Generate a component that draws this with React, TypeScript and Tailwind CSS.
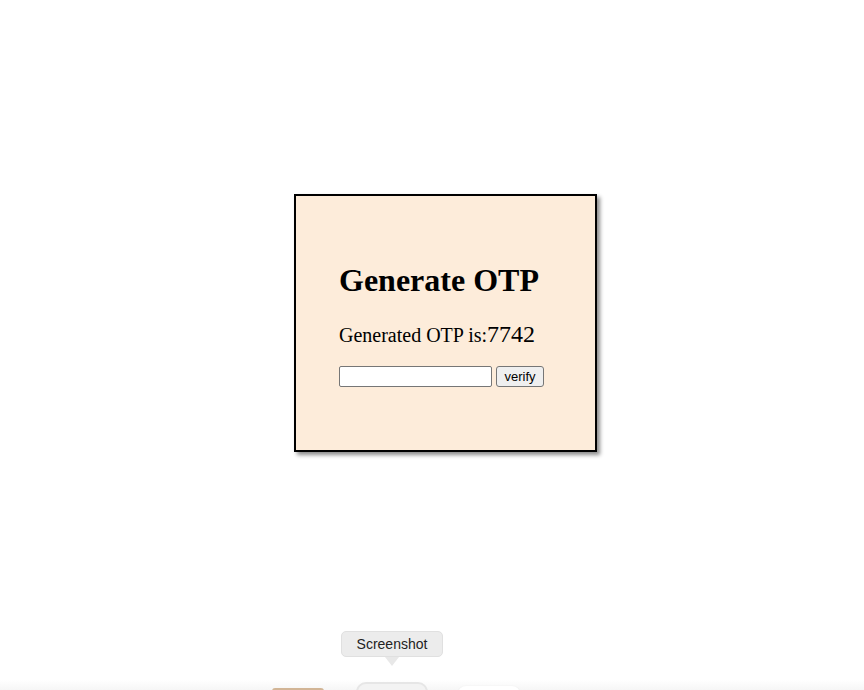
import React, { useState } from 'react';

const serif = { fontFamily: '"Liberation Serif", "Times New Roman", serif' };

const OtpCard = () => {
  const [code, setCode] = useState('');

  return (
    <div
      className="box-border h-[258px] w-[303px] border-2 border-black bg-[#fdecda] pl-[43px] pt-[66px] shadow-[3px_3px_4px_rgba(0,0,0,0.45)]"
      style={serif}
    >
      <h1 className="m-0 text-[32px] font-bold leading-[37px] text-black">Generate OTP</h1>
      <p className="m-0 mt-[21px] text-[20px] leading-[28px] text-black">
        Generated OTP is:<span className="text-[24px] leading-[28px]">7742</span>
      </p>
      <div className="mt-[17px] flex items-center gap-[4px]">
        <input
          value={code}
          onChange={e => setCode(e.target.value)}
          className="box-border h-[21px] w-[153px] rounded-[2px] border border-[#767676] bg-white px-1 text-[13px] outline-none"
        />
        <button
          className="box-border h-[21px] w-[48px] rounded-[3px] border border-[#767676] bg-[#efefef] text-[13px] leading-none text-black"
          style={{ fontFamily: '"Liberation Sans", Arial, sans-serif' }}
        >
          verify
        </button>
      </div>
    </div>
  );
};

export default function App() {
  return (
    <div className="relative h-[690px] w-full overflow-hidden bg-white">
      <div className="pl-[294px] pt-[194px]">
        <OtpCard />
      </div>

      {/* tooltip over the dock */}
      <div className="absolute left-[341px] top-[631px] flex flex-col items-center">
        <div
          className="flex h-[26px] w-[102px] items-center justify-center rounded-[5px] border border-[#e0e0e0] bg-[#ececec] text-[14px] text-[#222]"
          style={{ fontFamily: '"Liberation Sans", Helvetica, Arial, sans-serif' }}
        >
          Screenshot
        </div>
        <div className="h-0 w-0 border-x-[7px] border-t-[9px] border-x-transparent border-t-[#e8e8e8]" />
      </div>

      {/* dock strip */}
      <div className="absolute bottom-0 left-0 flex h-[10px] w-full items-start bg-gradient-to-b from-white to-[#f6f6f6] pl-[272px]">
        <div className="mt-[8px] h-[4px] w-[52px] rounded-t-[3px] bg-[#d2b596]" />
        <div className="ml-[32px] mt-[2px] h-[12px] w-[72px] rounded-t-[10px] border-[2px] border-[#e6e6e6] bg-[#f3f3f3]" />
        <div className="ml-[30px] mt-[6px] h-[8px] w-[62px] rounded-t-[10px] bg-white shadow-[0_0_2px_rgba(0,0,0,0.05)]" />
      </div>
    </div>
  );
}
